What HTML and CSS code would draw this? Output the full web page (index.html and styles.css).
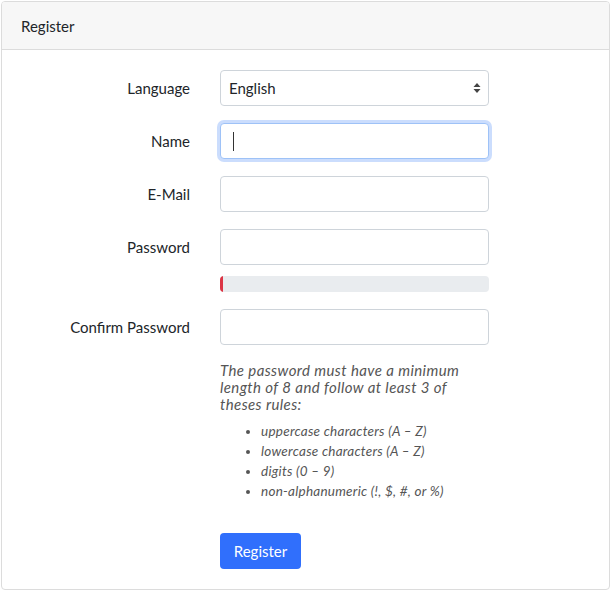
FILE: index.html
```html
<!DOCTYPE html>
<html lang="en">
<head>
<meta charset="utf-8">
<title>Register</title>
<link rel="stylesheet" href="styles.css">
</head>
<body>
<div class="card">
  <div class="card-header">Register</div>
  <div class="card-body">
    <form class="form">
      <label class="label">Language</label>
      <div class="select">
        <span>English</span>
        <svg class="arrows" width="8" height="12" viewBox="0 0 8 12"><path d="M4 1 L7.5 5 H0.5 Z" fill="#444"/><path d="M4 11 L7.5 7 H0.5 Z" fill="#444"/></svg>
      </div>

      <label class="label">Name</label>
      <div class="input focused"><span class="caret"></span></div>

      <label class="label">E-Mail</label>
      <div class="input"></div>

      <label class="label">Password</label>
      <div class="stack">
        <div class="input"></div>
        <div class="progress"><div class="progress-bar" style="width:3px"></div></div>
      </div>

      <label class="label">Confirm Password</label>
      <div class="input"></div>

      <div class="field">
        <p class="hint">The password must have a minimum<br>length of 8 and follow at least 3 of<br>theses rules:</p>
        <ul class="rules">
          <li>uppercase characters (A – Z)</li>
          <li>lowercase characters (A – Z)</li>
          <li>digits (0 – 9)</li>
          <li>non-alphanumeric (!, $, #, or %)</li>
        </ul>
      </div>

      <div class="field">
        <button type="button" class="btn">Register</button>
      </div>
    </form>
  </div>
</div>
</body>
</html>
```

FILE: styles.css
```css
* { box-sizing: border-box; }
html, body { margin: 0; padding: 0; background: #fff; }
body {
  font-family: Lato, "Open Sans", sans-serif;
  font-size: 15px;
  color: #212529;
}
.card {
  margin: 1px 1px 2px 1px;
  border: 1px solid #dcdcdc;
  border-radius: 4px;
  overflow: hidden;
}
.card-header {
  height: 48px;
  background: #f7f7f7;
  border-bottom: 1px solid #dcdcdc;
  padding: 0 19px;
  display: flex;
  align-items: center;
  font-size: 15px;
}
.card-body {
  padding: 20px 18px 20px 18px;
}
.form {
  display: grid;
  grid-template-columns: 170px 269px;
  column-gap: 30px;
  row-gap: 17px;
  margin: 0;
}
.label {
  text-align: right;
  line-height: 36px;
  align-self: start;
}
.field { grid-column: 2; }
.select, .input {
  height: 36px;
  border: 1px solid #ced4da;
  border-radius: 4px;
  background: #fff;
  position: relative;
}
.select {
  display: flex;
  align-items: center;
  justify-content: space-between;
  padding: 0 7px 0 8px;
}
.focused {
  border-color: #9ec2f7;
  box-shadow: 0 0 0 3px rgba(48, 118, 248, 0.25);
}
.caret {
  position: absolute;
  left: 12px;
  top: 8px;
  width: 1px;
  height: 19px;
  background: #333;
}
.stack {
  display: flex;
  flex-direction: column;
  gap: 11px;
}
.progress {
  height: 16px;
  background: #e9ecef;
  border-radius: 4px;
  overflow: hidden;
}
.progress-bar {
  height: 100%;
  background: #dc3545;
}
.hint {
  margin: 0;
  font-style: italic;
  line-height: 17px;
  letter-spacing: 0.4px;
  color: #555;
}
.rules {
  margin: 8px 0 0;
  padding-left: 41px;
  font-style: italic;
  font-size: 13.5px;
  line-height: 20px;
  letter-spacing: 0.25px;
  color: #555;
}
.btn {
  margin-top: 15px;
  height: 36px;
  width: 81px;
  border: 0;
  border-radius: 4px;
  background: #306ffc;
  color: #fff;
  font-family: inherit;
  font-size: 15px;
  padding: 0;
}
```
